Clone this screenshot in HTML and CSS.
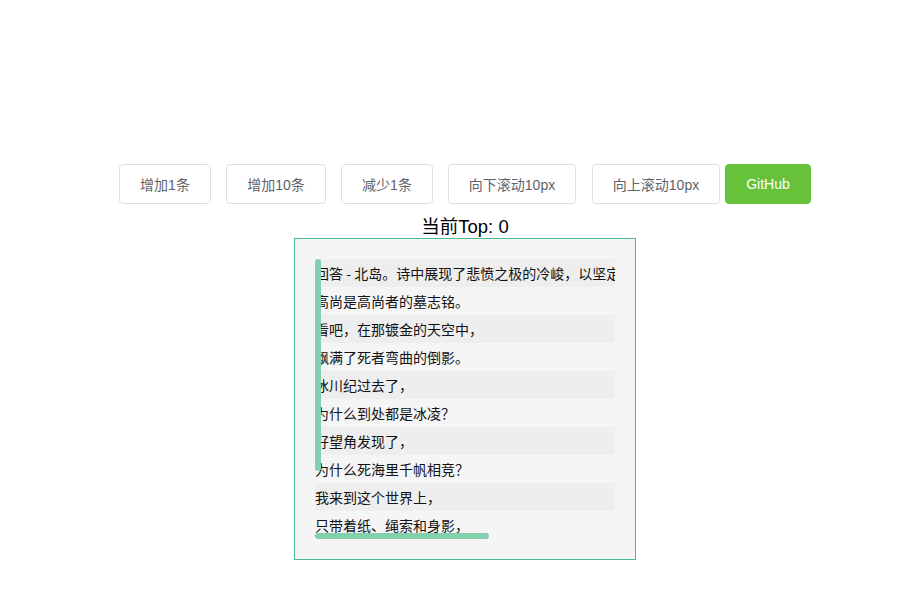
FILE: index.html
```html
<!DOCTYPE html>
<html lang="zh-CN">
<head>
<meta charset="utf-8">
<title>scroll demo</title>
<link rel="stylesheet" href="styles.css">
</head>
<body>
<div class="page">
  <div class="toolbar">
    <button class="btn btn-s">增加1条</button>
    <button class="btn btn-m">增加10条</button>
    <button class="btn btn-s">减少1条</button>
    <button class="btn btn-l">向下滚动10px</button>
    <button class="btn btn-l btn-gap">向上滚动10px</button>
    <a class="gh-link" href="#"><button class="btn btn-success">GitHub</button></a>
  </div>
  <div class="top-info">当前Top: 0</div>
  <div class="box">
    <div class="viewport">
      <div class="content">
        <div class="row">回答 - 北岛。诗中展现了悲愤之极的冷峻，以坚定的口吻表达了对暴力世界的怀疑</div>
        <div class="row">高尚是高尚者的墓志铭。</div>
        <div class="row">看吧，在那镀金的天空中，</div>
        <div class="row">飘满了死者弯曲的倒影。</div>
        <div class="row">冰川纪过去了，</div>
        <div class="row">为什么到处都是冰凌？</div>
        <div class="row">好望角发现了，</div>
        <div class="row">为什么死海里千帆相竞？</div>
        <div class="row">我来到这个世界上，</div>
        <div class="row">只带着纸、绳索和身影，</div>
      </div>
      <div class="bar bar-v"></div>
      <div class="bar bar-h"></div>
    </div>
  </div>
</div>
</body>
</html>
```
FILE: styles.css
```css
html, body {
  margin: 0;
  padding: 0;
  background: #fff;
}
.page {
  padding-left: 28px;
  padding-top: 164px;
  text-align: center;
  font-family: "Liberation Sans", "Noto Sans CJK SC", sans-serif;
}
.toolbar {
  display: flex;
  justify-content: center;
  align-items: center;
  height: 40px;
}
.btn {
  box-sizing: border-box;
  height: 40px;
  padding: 0;
  font-family: "Liberation Sans", "Noto Sans CJK SC", sans-serif;
  font-size: 14px;
  color: #606266;
  background: #fff;
  border: 1px solid #dcdfe6;
  border-radius: 4px;
  margin-left: 15px;
  cursor: pointer;
}
.toolbar > .btn:first-child {
  margin-left: 0;
}
.btn-s { width: 92px; }
.btn-m { width: 100px; }
.btn-l { width: 128px; }
.btn-gap { margin-left: 16px; }
.gh-link {
  margin-left: 5px;
  display: block;
}
.btn-success {
  margin-left: 0;
  background: #67c23a;
  border-color: #67c23a;
  color: #fff;
  width: 86px;
}
.top-info {
  font-size: 18.5px;
  line-height: 21px;
  color: #000;
  margin-top: 12px;
  margin-bottom: 1px;
}
.box {
  box-sizing: border-box;
  width: 342px;
  height: 322px;
  margin: 0 auto;
  border: 1px solid #4cbd8c;
  background: #f5f5f5;
  padding: 20px;
  text-align: left;
}
.viewport {
  position: relative;
  width: 300px;
  height: 280px;
  overflow: hidden;
}
.content {
  width: 520px;
}
.row {
  height: 28px;
  line-height: 28px;
  font-size: 14px;
  color: #111;
  white-space: nowrap;
  font-family: "Noto Sans CJK SC", sans-serif;
}
.row:nth-child(odd) {
  background: #eeeeee;
}
.bar {
  position: absolute;
  background: #82d0ad;
  border-radius: 3px;
}
.bar-v {
  left: 0;
  top: 0;
  width: 6px;
  height: 212px;
}
.bar-h {
  left: 0;
  top: 274px;
  width: 174px;
  height: 6px;
}
```
